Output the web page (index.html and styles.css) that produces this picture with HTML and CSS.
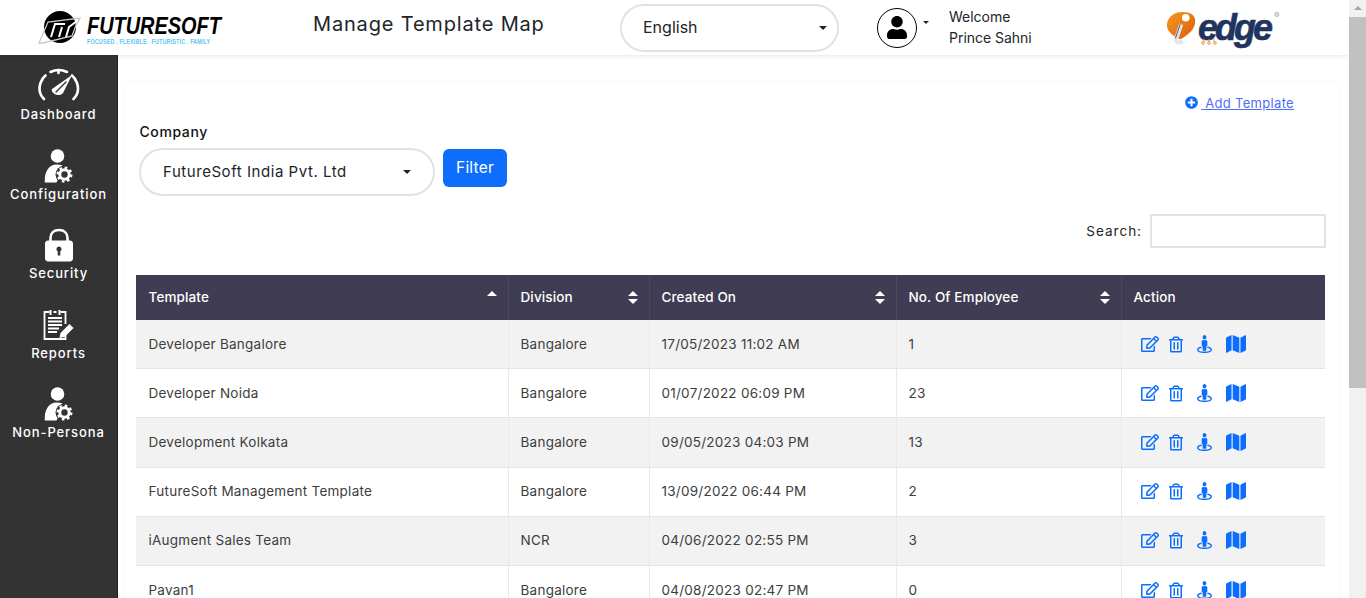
FILE: index.html
```html
<!DOCTYPE html>
<html lang="en">
<head>
  <meta charset="UTF-8" />
  <title>Manage Template Map</title>
  <meta name="viewport" content="width=device-width, initial-scale=1.0" />
  <link rel="stylesheet" href="styles.css">
</head>
<body>
  <svg class="icon-defs" width="0" height="0">
    <symbol id="i-edit" viewBox="0 0 576 512"><path d="M402.3 344.9l32-32c5-5 13.7-1.5 13.7 5.7V464c0 26.5-21.5 48-48 48H48c-26.5 0-48-21.5-48-48V112c0-26.5 21.5-48 48-48h273.5c7.1 0 10.7 8.6 5.7 13.7l-32 32c-1.5 1.5-3.5 2.3-5.7 2.3H48v352h352V350.5c0-2.1.8-4.1 2.3-5.6zm156.6-201.8L296.3 405.7l-90.4 10c-26.2 2.9-48.5-19.2-45.6-45.6l10-90.4L432.9 17.1c22.9-22.9 59.9-22.9 82.7 0l43.2 43.2c22.9 22.9 22.9 60 .1 82.8zM460.1 174L402 115.9 216.2 301.8l-7.3 65.3 65.3-7.3L460.1 174zm64.8-79.7l-43.2-43.2c-4.1-4.1-10.8-4.1-14.8 0L436 82l58.1 58.1 30.9-30.9c4-4.2 4-10.8-.1-14.9z"/></symbol>
    <symbol id="i-trash" viewBox="0 0 448 512"><path d="M268 416h24a12 12 0 0 0 12-12V188a12 12 0 0 0-12-12h-24a12 12 0 0 0-12 12v216a12 12 0 0 0 12 12zM432 80h-82.41l-34-56.7A48 48 0 0 0 274.41 0H173.59a48 48 0 0 0-41.16 23.3L98.41 80H16A16 16 0 0 0 0 96v16a16 16 0 0 0 16 16h16v336a48 48 0 0 0 48 48h288a48 48 0 0 0 48-48V128h16a16 16 0 0 0 16-16V96a16 16 0 0 0-16-16zM171.84 50.91A6 6 0 0 1 177 48h94a6 6 0 0 1 5.15 2.91L293.61 80H154.39zM368 464H80V128h288zm-212-48h24a12 12 0 0 0 12-12V188a12 12 0 0 0-12-12h-24a12 12 0 0 0-12 12v216a12 12 0 0 0 12 12z"/></symbol>
    <symbol id="i-street" viewBox="0 0 512 512" preserveAspectRatio="none"><path d="M367.9 329.76c-4.62 5.3-9.78 10.1-15.9 13.65v22.94c66.52 9.34 112 28.05 112 49.65 0 30.93-93.12 56-208 56S48 446.93 48 416c0-21.6 45.48-40.3 112-49.65v-22.94c-6.12-3.55-11.28-8.35-15.9-13.65C58.87 345.34 0 378.05 0 416c0 53.02 114.62 96 256 96s256-42.98 256-96c0-37.95-58.87-70.66-144.1-86.24zM256 128c35.35 0 64-28.65 64-64S291.35 0 256 0s-64 28.65-64 64 28.65 64 64 64zm-64 192v96c0 17.67 14.33 32 32 32h64c17.67 0 32-14.33 32-32v-96c17.67 0 32-14.33 32-32v-96c0-26.51-21.49-48-48-48h-11.8c-11.07 5.03-23.26 8-36.2 8s-25.13-2.97-36.2-8H208c-26.51 0-48 21.49-48 48v96c0 17.67 14.33 32 32 32z"/></symbol>
    <symbol id="i-map" viewBox="0 30 576 452" preserveAspectRatio="none"><path d="M0 117.66v346.32c0 11.32 11.43 19.06 21.94 14.86L160 416V32L20.12 87.95A32.006 32.006 0 0 0 0 117.66zM192 416l192 64V96L192 32v384zM554.06 33.16L416 96v384l139.88-55.95A31.996 31.996 0 0 0 576 394.34V48.02c0-11.32-11.43-19.06-21.94-14.86z"/></symbol>
    <symbol id="i-user-cog" viewBox="0 0 29 34">
      <circle cx="13" cy="7" r="6.800" fill="#fff"/>
      <path d="M0 33.500c0-11 4-18 12.500-18 3 0 5.500.8 7.500 2.500l-8 15.500z" fill="#fff"/>
      <circle cx="20" cy="25.500" r="9" fill="#333"/>
      <circle cx="20" cy="25.500" r="4.700" fill="none" stroke="#fff" stroke-width="3"/>
      <circle cx="20" cy="25.500" r="6.800" fill="none" stroke="#fff" stroke-width="2.400" stroke-dasharray="2.600 2.740"/>
    </symbol>
  </svg>

  <div class="page">
    <div class="main">
      <header class="topbar">
        <div class="brand">
          <svg class="brand-mark" viewBox="0 0 48 36" width="48" height="36">
            <circle cx="24" cy="17" r="16" fill="#000"/>
            <path d="M3 33 12 12 44 8 40 15 36 26 7 33z" fill="none" stroke="#c9c9c9" stroke-width="1.300"/>
            <path d="M15 27 19 14H29M23 27 26 17M30 27 33 17 41 11" fill="none" stroke="#fff" stroke-width="2"/>
          </svg>
          <div class="brand-text">
            <div class="brand-name">FUTURESOFT</div>
            <div class="brand-tag">FOCUSED . FLEXIBLE . FUTURISTIC . FAMILY</div>
          </div>
        </div>
        <h1 class="page-title">Manage Template Map</h1>
        <div class="select select-lang"><span class="select-value">English</span><span class="caret"></span></div>
        <div class="avatar">
          <svg viewBox="0 0 448 512" width="20" height="25"><path d="M224 256c70.700 0 128-57.300 128-128S294.700 0 224 0 96 57.300 96 128s57.300 128 128 128zm89.600 32h-16.700c-22.200 10.200-46.900 16-72.900 16s-50.600-5.800-72.900-16h-16.700C60.200 288 0 348.200 0 422.400V464c0 26.500 21.500 48 48 48h352c26.500 0 48-21.500 48-48v-41.600c0-74.200-60.200-134.400-134.400-134.400z"/></svg>
        </div>
        <span class="caret caret-small"></span>
        <div class="welcome">Welcome<br>Prince Sahni</div>
        <div class="iedge">
          <svg class="iedge-mark" viewBox="0 0 34 36" width="32" height="36">
            <defs><linearGradient id="orange" x1="0" y1="0" x2="1" y2="1"><stop offset="0" stop-color="#f59a1f"/><stop offset="1" stop-color="#dc5a0c"/></linearGradient></defs>
            <path d="M17 1c9 0 14 3 14 10 0 9-9 15-16 19C7 26 1 22 1 15 1 7 8 1 17 1z" fill="url(#orange)"/>
            <path d="M16 14 11 29c-1 4 2 6 7 3" fill="none" stroke="#e4e6ea" stroke-width="4.500"/>
            <path d="M15 14 10 29" fill="none" stroke="#2a4d7f" stroke-width="1"/>
            <circle cx="21" cy="7" r="4" fill="#fff"/>
          </svg>
          <span class="iedge-name">edge</span><sup class="iedge-reg">®</sup>
          <svg class="iedge-chip" viewBox="0 0 16 6" width="16" height="6" fill="none" stroke="#e8923a" stroke-width="1">
            <path d="M3 0v3M8 0v3M13 0v3"/><circle cx="2" cy="4" r="1.300"/><circle cx="8" cy="4" r="1.300"/><circle cx="14" cy="4" r="1.300"/>
          </svg>
        </div>
      </header>

      <div class="workspace">
        <nav class="sidebar">
          <a class="nav-item">
            <svg class="nav-icon" viewBox="0 -1 44 38" fill="none" stroke="#fff" stroke-width="2.600" stroke-linecap="round">
              <path d="M7 31C3 27 1.500 21 3.500 15 4.500 12 6 9.500 8.500 7.500M13.500 4C18.500 1.500 25 1.500 30 4M35 7.500c2.500 2 4 4.500 5 7.500 2 6 .5 12-3.500 16"/>
              <path d="M21.500 2v3"/>
              <path d="M15 21 35 7 26 25c-2 2.500-6 2.500-8.500 1-2.500-2-3.500-3.500-2.500-5z" fill="#fff" stroke="none"/>
              <path d="M19 24 29 14" stroke="#333" stroke-width="1.400"/>
            </svg>
            <span>Dashboard</span>
          </a>
          <a class="nav-item">
            <svg class="nav-icon" viewBox="-7.500 -2 44 38"><use href="#i-user-cog" width="29" height="34"/></svg>
            <span>Configuration</span>
          </a>
          <a class="nav-item">
            <svg class="nav-icon" viewBox="-8 -2.500 44 38">
              <path d="M5.500 14V9.500C5.500 4.500 9 1.500 14 1.500s8.500 3 8.500 8V14" fill="none" stroke="#fff" stroke-width="2.600"/>
              <path fill-rule="evenodd" fill="#fff" d="M3 12h22c1.600 0 3 1.400 3 3v15c0 1.600-1.400 3-3 3H3c-1.600 0-3-1.400-3-3V15c0-1.600 1.400-3 3-3zm11 6a2.600 2.600 0 0 0-1.300 4.800V27h2.600v-4.200A2.600 2.600 0 0 0 14 18z"/>
            </svg>
            <span>Security</span>
          </a>
          <a class="nav-item">
            <svg class="nav-icon" viewBox="-5.500 -3 44 38" fill="none" stroke="#fff">
              <path d="M7 3H2v27h21v-6M18 3h5v12" stroke-width="1.800"/>
              <path d="M8 1v5M17 1v5M11 3h3" stroke-width="2"/>
              <path d="M5.500 9h14M5.500 12.500h14M5.500 16h14M5.500 19.500h11M5.500 23h9" stroke-width="2"/>
              <path d="M17 29l1-5 9-9 4 4-9 9z" fill="#fff" stroke="none"/>
            </svg>
            <span>Reports</span>
          </a>
          <a class="nav-item">
            <svg class="nav-icon" viewBox="-7.500 -2 44 38"><use href="#i-user-cog" width="29" height="34"/></svg>
            <span>Non-Persona</span>
          </a>
        </nav>

        <main class="content">
          <div class="card">
            <div class="add-row">
              <a class="add-link">
                <svg viewBox="0 0 512 512" width="13" height="13"><path d="M256 8C119 8 8 119 8 256s111 248 248 248 248-111 248-248S393 8 256 8zm144 276c0 6.600-5.400 12-12 12h-92v92c0 6.600-5.400 12-12 12h-56c-6.600 0-12-5.400-12-12v-92h-92c-6.600 0-12-5.400-12-12v-56c0-6.600 5.400-12 12-12h92v-92c0-6.600 5.400-12 12-12h56c6.600 0 12 5.400 12 12v92h92c6.600 0 12 5.400 12 12v56z"/></svg>
                <span>&nbsp;Add Template</span>
              </a>
            </div>

            <div class="filter">
              <label class="filter-label">Company</label>
              <div class="filter-row">
                <div class="select select-company"><span class="select-value">FutureSoft India Pvt. Ltd</span><span class="caret"></span></div>
                <button class="btn">Filter</button>
              </div>
            </div>

            <div class="search-row">
              <label>Search:</label>
              <input class="search-input" type="text">
            </div>

            <table class="grid">
              <colgroup>
                <col class="col-template"><col class="col-division"><col class="col-created"><col class="col-count"><col class="col-action">
              </colgroup>
              <thead>
                <tr>
                  <th>Template<span class="sort sort-asc"></span></th>
                  <th>Division<span class="sort"></span></th>
                  <th>Created On<span class="sort"></span></th>
                  <th>No. Of Employee<span class="sort"></span></th>
                  <th>Action</th>
                </tr>
              </thead>
              <tbody id="rows"></tbody>
            </table>
          </div>
        </main>
      </div>
    </div>

    <div class="scrollbar">
      <span class="scroll-up"></span>
      <div class="scroll-thumb"></div>
    </div>
  </div>

  <script>
    const data = [
      ["Developer Bangalore", "Bangalore", "17/05/2023 11:02 AM", "1"],
      ["Developer Noida", "Bangalore", "01/07/2022 06:09 PM", "23"],
      ["Development Kolkata", "Bangalore", "09/05/2023 04:03 PM", "13"],
      ["FutureSoft Management Template", "Bangalore", "13/09/2022 06:44 PM", "2"],
      ["iAugment Sales Team", "NCR", "04/06/2022 02:55 PM", "3"],
      ["Pavan1", "Bangalore", "04/08/2023 02:47 PM", "0"]
    ];

    const actions = `
      <div class="actions">
        <svg class="a-edit"><use href="#i-edit"/></svg>
        <svg class="a-trash"><use href="#i-trash"/></svg>
        <svg class="a-street"><use href="#i-street"/></svg>
        <svg class="a-map"><use href="#i-map"/></svg>
      </div>`;

    document.getElementById("rows").innerHTML = data.map(row =>
      "<tr>" + row.map(v => `<td>${v}</td>`).join("") + `<td>${actions}</td></tr>`
    ).join("");
  </script>
</body>
</html>
```
FILE: styles.css
```css
* {
  box-sizing: border-box;
}

html, body {
  height: 100%;
}

body {
  margin: 0;
  overflow: hidden;
  background-color: #fff;
  color: #212529;
  font-family: Inter, 'Noto Sans', sans-serif;
}

.icon-defs {
  display: block;
  height: 0;
}

.page {
  display: flex;
  height: 100vh;
}

.main {
  flex: 1;
  min-width: 0;
  display: flex;
  flex-direction: column;
}

/* header */
.topbar {
  flex: none;
  height: 55px;
  display: flex;
  align-items: center;
  background-color: #fff;
  box-shadow: 0 1px 5px rgba(0, 0, 0, 0.1);
  position: relative;
  z-index: 2;
}

.brand {
  width: 313px;
  padding-left: 36px;
  display: flex;
  align-items: flex-start;
}

.brand-mark {
  flex: none;
}

.brand-text {
  margin-left: 3px;
  padding-top: 4px;
}

.brand-name {
  font-family: 'Liberation Sans', sans-serif;
  font-size: 24px;
  line-height: 24px;
  font-weight: bold;
  font-style: italic;
  color: #000;
  white-space: nowrap;
  transform: scaleX(0.83);
  transform-origin: left;
}

.brand-tag {
  font-family: 'Liberation Sans', sans-serif;
  font-size: 7px;
  line-height: 8px;
  font-weight: bold;
  color: #5cc8f5;
  letter-spacing: 0.2px;
  white-space: nowrap;
  transform: scaleX(0.77);
  transform-origin: left;
}

.page-title {
  width: 307px;
  margin: -7px 0 0;
  font-size: 20px;
  font-weight: 400;
  letter-spacing: 0.83px;
  color: #212529;
  white-space: nowrap;
}

.select {
  display: flex;
  align-items: center;
  justify-content: space-between;
  height: 48px;
  border: 2px solid #e2e2e2;
  border-radius: 24px;
  background-color: #fff;
  color: #212529;
  font-size: 16px;
  letter-spacing: 0.4px;
}

.select-lang {
  width: 219px;
  padding: 0 10px 0 21px;
  letter-spacing: 0;
}

.select-value {
  margin-top: -2px;
}

.caret {
  display: inline-block;
  width: 0;
  height: 0;
  border-left: 4px solid transparent;
  border-right: 4px solid transparent;
  border-top: 4px solid #212529;
}

.avatar {
  width: 40px;
  height: 40px;
  margin-left: 38px;
  border: 1.5px solid #000;
  border-radius: 50%;
  display: flex;
  align-items: center;
  justify-content: center;
}

.caret-small {
  margin: -10px 0 0 6px;
  border-left-width: 3.500px;
  border-right-width: 3.500px;
  border-top-width: 3.500px;
}

.welcome {
  width: 217px;
  margin-left: 20px;
  margin-top: -2px;
  padding-top: 1px;
  font-size: 14px;
  line-height: 21px;
  letter-spacing: -0.02px;
}

.iedge {
  display: flex;
  align-items: center;
  height: 40px;
  position: relative;
}

.iedge-name {
  font-family: 'Liberation Sans', sans-serif;
  font-size: 36px;
  line-height: 36px;
  font-weight: bold;
  font-style: italic;
  letter-spacing: -3px;
  color: #1f3560;
  -webkit-text-stroke: 0.6px #1f3560;
}

.iedge-reg {
  align-self: flex-start;
  margin: 2px 0 0 4px;
  font-size: 8px;
  line-height: 10px;
  color: #8a93a3;
}

.iedge-chip {
  position: absolute;
  left: 35px;
  top: 31px;
}

/* sidebar */
.workspace {
  flex: 1;
  min-height: 0;
  display: flex;
  overflow: hidden;
}

.sidebar {
  flex: none;
  width: 118px;
  padding-top: 12px;
  background-color: #333;
  border-right: 1px solid #222;
}

.nav-item {
  height: 79.500px;
  display: flex;
  flex-direction: column;
  align-items: center;
  color: #fff;
  font-size: 13px;
  letter-spacing: 0.9px;
  font-weight: 500;
}

.nav-icon {
  flex: none;
  width: 44px;
  height: 38px;
}

.nav-item span {
  margin-top: 1px;
  line-height: 16px;
}

/* content */
.content {
  flex: 1;
  min-width: 0;
  padding: 28px 11px 0 7px;
}

.card {
  padding: 11px 12px 0 11px;
  box-shadow: 0 0 6px rgba(0, 0, 0, 0.03);
}

.add-row {
  display: flex;
  justify-content: flex-end;
  padding-right: 32px;
  height: 26px;
}

.add-link {
  display: inline-flex;
  align-items: center;
  height: 17px;
  font-size: 13px;
  letter-spacing: 0.32px;
  color: #4d6ef5;
  white-space: nowrap;
}

.add-link svg {
  fill: #0d6efd;
  flex: none;
  margin-right: 3px;
}

.add-link span {
  text-decoration: underline;
}

.filter {
  padding-left: 3px;
}

.filter-label {
  display: block;
  font-size: 14px;
  line-height: 17px;
  font-weight: 500;
  letter-spacing: 0.6px;
  color: #111;
  margin-top: 3px;
  margin-bottom: 8px;
  margin-left: 0.500px;
}

.filter-row {
  display: flex;
  align-items: flex-start;
  gap: 8px;
}

.select-company {
  width: 296px;
  padding: 0 22px 0 22px;
  font-size: 15px;
  letter-spacing: 0.55px;
}

.btn {
  height: 38px;
  width: 64px;
  margin-top: 1px;
  padding: 0 0 2px;
  border: none;
  border-radius: 6px;
  background-color: #0d6efd;
  color: #fff;
  font-family: inherit;
  font-size: 15.500px;
  letter-spacing: 0.2px;
}

.search-row {
  display: flex;
  justify-content: flex-end;
  align-items: center;
  gap: 8px;
  margin-top: 18px;
  font-size: 13.500px;
  letter-spacing: 1px;
}

.search-input {
  width: 176px;
  height: 34px;
  border: 2px solid #e2e2e2;
  background: #fff;
}

/* table */
.grid {
  width: 1189px;
  margin-top: 27px;
  table-layout: fixed;
  border-collapse: separate;
  border-spacing: 0;
  font-size: 13.500px;
  letter-spacing: 0.25px;
}

.col-template { width: 372px; }
.col-division { width: 141px; }
.col-created { width: 247px; }
.col-count { width: 225px; }
.col-action { width: 204px; }

.grid th {
  height: 45px;
  padding: 0 12px 2px 11.500px;
  background-color: #3f3c53;
  color: #fff;
  font-weight: 500;
  letter-spacing: 0.12px;
  text-align: left;
  position: relative;
  border-left: 1px solid #4b4860;
}

.grid td {
  height: 49px;
  padding: 0 12px 0 11.500px;
  color: #3d3d3d;
  border-left: 1px solid #e9e9e9;
  border-bottom: 1px solid #e4e4e4;
}

.grid th:first-child,
.grid td:first-child {
  border-left: none;
  padding-left: 12.500px;
}

/* third row is a pixel taller in the original, from rounding */
.grid tbody tr:nth-child(3) td {
  height: 50px;
  padding-bottom: 1px;
}

.grid tbody tr:nth-child(4) td,
.grid tbody tr:nth-child(5) td {
  padding-bottom: 2px;
}

.grid tbody tr:nth-child(odd) td {
  background-color: #f2f2f2;
}

.sort {
  position: absolute;
  right: 11px;
  top: 16px;
  width: 10px;
  height: 13px;
}

.sort::before,
.sort::after {
  content: "";
  position: absolute;
  left: 0;
  border-left: 5px solid transparent;
  border-right: 5px solid transparent;
}

.sort::before {
  top: 0;
  border-bottom: 5px solid #fff;
}

.sort::after {
  bottom: 0;
  border-top: 5px solid #fff;
}

.sort-asc::after {
  display: none;
}

.actions {
  display: flex;
  align-items: center;
  fill: #0d6efd;
}

.a-edit { width: 18px; height: 16px; margin-left: 7px; }
.a-trash { width: 14px; height: 17px; margin-left: 10px; }
.a-street { width: 15px; height: 18px; margin-left: 14px; }
.a-map { width: 20px; height: 18px; margin-left: 14px; }

/* scrollbar */
.scrollbar {
  flex: none;
  width: 17px;
  background-color: #f1f1f1;
  position: relative;
  z-index: 3;
}

.scroll-up {
  display: block;
  width: 0;
  height: 0;
  margin: 6px auto 0;
  border-left: 4px solid transparent;
  border-right: 4px solid transparent;
  border-bottom: 4px solid #a3a3a3;
}

.scroll-thumb {
  height: 371px;
  margin-top: 7px;
  background-color: #c1c1c1;
}
```
